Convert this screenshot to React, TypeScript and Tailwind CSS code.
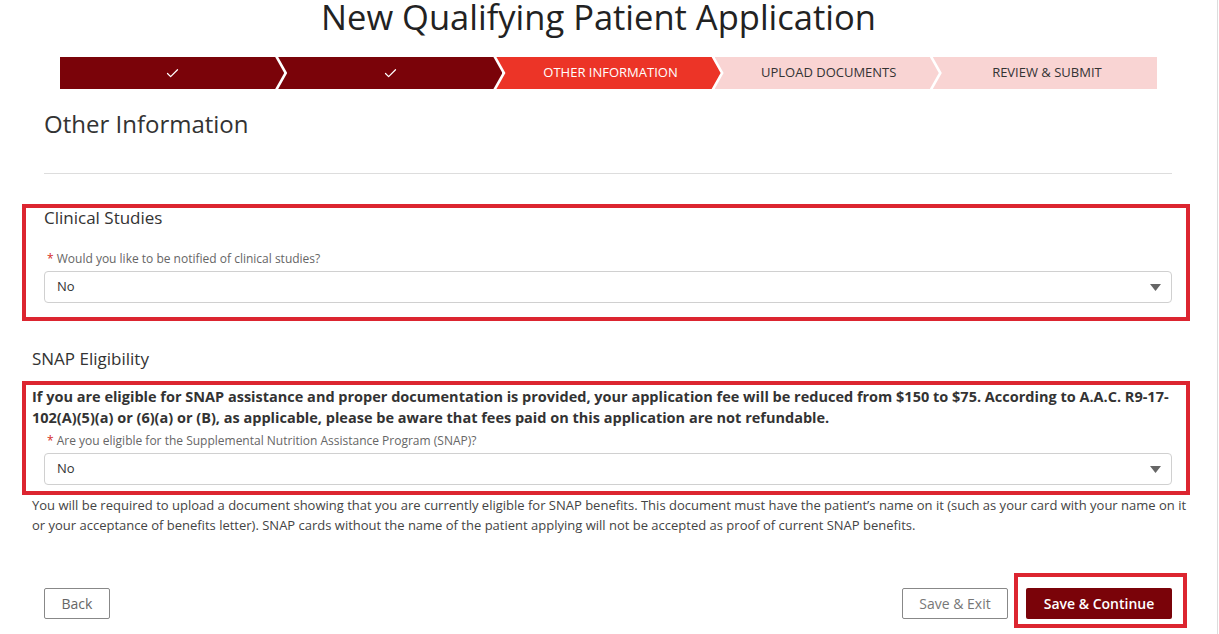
import { Check } from "lucide-react";

const font = { fontFamily: '"Open Sans", "Liberation Sans", sans-serif' };

type Step = { label: string; state: "done" | "active" | "todo" };

const steps: Step[] = [
  { label: "", state: "done" },
  { label: "", state: "done" },
  { label: "Other Information", state: "active" },
  { label: "Upload Documents", state: "todo" },
  { label: "Review & Submit", state: "todo" },
];

function Stepper() {
  return (
    <div className="ml-[38px] flex h-8 w-[1097px]">
      {steps.map((s, i) => {
        const first = i === 0;
        const last = i === steps.length - 1;
        const bg =
          s.state === "done"
            ? "bg-[#7a0309] text-white"
            : s.state === "active"
              ? "bg-[#ec3427] text-white"
              : "bg-[#f9d4d3] text-[#333]";
        const shape = first
          ? "[clip-path:polygon(0_0,calc(100%-9px)_0,100%_50%,calc(100%-9px)_100%,0_100%)]"
          : last
            ? "[clip-path:polygon(0_0,100%_0,100%_100%,0_100%,9px_50%)]"
            : "[clip-path:polygon(0_0,calc(100%-9px)_0,100%_50%,calc(100%-9px)_100%,0_100%,9px_50%)]";
        return (
          <div
            key={i}
            className={`flex flex-1 items-center justify-center text-[13px] uppercase ${bg} ${shape} ${first ? "" : "-ml-[6px]"}`}
          >
            {s.state === "done" ? (
              <Check size={15} strokeWidth={2} />
            ) : (
              <span className="pl-1">{s.label}</span>
            )}
          </div>
        );
      })}
    </div>
  );
}

function Select({ value }: { value: string }) {
  return (
    <div className="flex h-8 items-center justify-between rounded-[4px] border border-[#d0d0d0] bg-white pl-[12px] pr-[10px] text-[13px] text-[#333]">
      <span>{value}</span>
      <svg width="11" height="7" viewBox="0 0 11 7">
        <polygon points="0,0 11,0 5.5,7" fill="#666" />
      </svg>
    </div>
  );
}

function Label({ text }: { text: string }) {
  return (
    <div className="pl-[3px] text-[12px] leading-4 text-[#666]">
      <span className="text-[#d52b1e]">*</span> {text}
    </div>
  );
}

export default function App() {
  return (
    <div className="flex min-h-screen bg-white" style={font}>
      <div className="w-[1218px] border-r border-[#ddd]">
        <h1 className="pr-[20px] text-center text-[34.5px] leading-[34px] text-[#222]">
          New Qualifying Patient Application
        </h1>

        <div className="mt-[23px] ml-[22px] w-[1168px]">
          <Stepper />

          <h2 className="mt-[19px] pl-[22px] text-[24px] leading-8 text-[#333]">
            Other Information
          </h2>
          <hr className="mt-[33px] ml-[22px] mr-[18px] border-t border-[#ddd]" />

          <div className="mt-[30px] border-4 border-[#dc2530] pl-[18px] pr-[14px] pb-[14px]">
            <h3 className="text-[17px] leading-5 text-[#333]">Clinical Studies</h3>
            <div className="mt-[23px]">
              <Label text="Would you like to be notified of clinical studies?" />
            </div>
            <div className="mt-[4px]">
              <Select value="No" />
            </div>
          </div>

          <h3 className="mt-[28px] pl-[10px] text-[17px] leading-5 text-[#333]">
            SNAP Eligibility
          </h3>

          <div className="mt-[12px] border-4 border-[#dc2530] pl-[6px] pr-[14px] pt-px pb-[6px]">
            <p className="text-[14.5px] font-bold leading-[21px] text-[#333]">
              If you are eligible for SNAP assistance and proper documentation is provided,
              your application fee will be reduced from $150 to $75. According to A.A.C.
              R9-17-102(A)(5)(a) or (6)(a) or (B), as applicable, please be aware that fees
              paid on this application are not refundable.
            </p>
            <div className="ml-[12px] mt-[5px]">
              <Label text="Are you eligible for the Supplemental Nutrition Assistance Program (SNAP)?" />
              <div className="mt-[4px]">
                <Select value="No" />
              </div>
            </div>
          </div>

          <p className="pl-[10px] text-[13px] leading-5 text-[#444]">
            You will be required to upload a document showing that you are currently eligible
            for SNAP benefits. This document must have the patient’s name on it (such as your
            card with your name on it or your acceptance of benefits letter). SNAP cards without
            the name of the patient applying will not be accepted as proof of current SNAP
            benefits.
          </p>

          <div className="mt-[38px] flex items-start justify-between pl-[22px] pr-[3px]">
            <button className="mt-[15px] h-[31px] w-[66px] rounded-[2px] border border-[#888] bg-white text-[14px] text-[#666]">
              Back
            </button>
            <div className="flex items-start gap-[6px]">
              <button className="mt-[15px] h-[31px] w-[106px] rounded-[2px] border border-[#888] bg-white text-[14px] text-[#777]">
                Save &amp; Exit
              </button>
              <div className="border-4 border-[#dc2530] pl-[8px] pr-[11px] pt-[11px] pb-[5px]">
                <button className="h-[31px] w-[146px] rounded-[2px] bg-[#7a0309] text-[14px] font-semibold text-white">
                  Save &amp; Continue
                </button>
              </div>
            </div>
          </div>
        </div>
      </div>
    </div>
  );
}
